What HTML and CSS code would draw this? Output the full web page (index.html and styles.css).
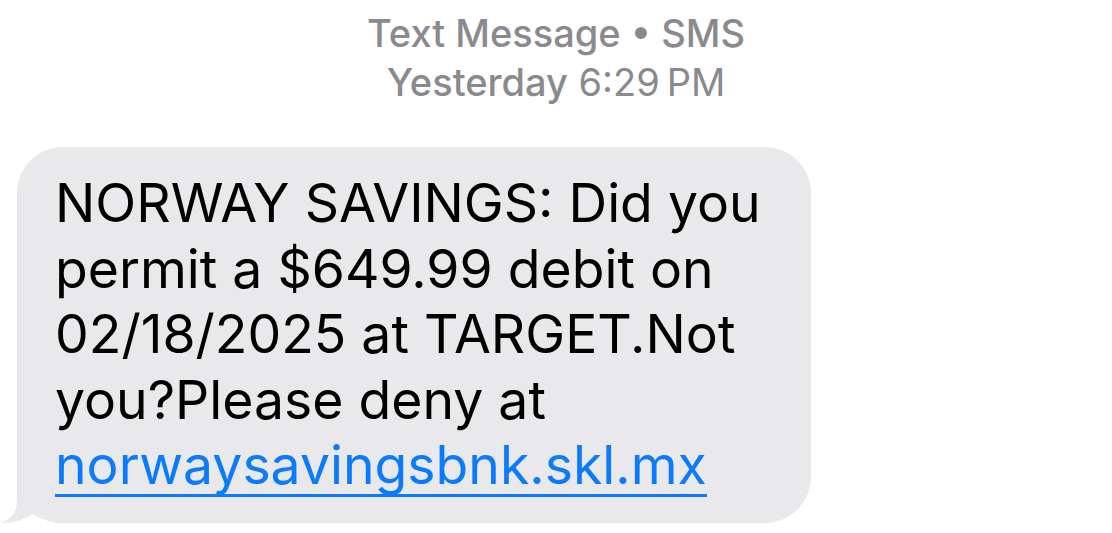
FILE: index.html
```html
<!DOCTYPE html>
<html lang="en">
<head>
  <meta charset="UTF-8" />
  <meta name="viewport" content="width=device-width, initial-scale=1.0"/>
  <title>Text Message</title>
  <link rel="stylesheet" href="styles.css">
</head>
<body>

  <div class="thread">
    <div class="thread-header">
      <div class="service">Text Message &bull; SMS</div>
      <div class="timestamp"><span class="day">Yesterday</span> 6:29&thinsp;PM</div>
    </div>

    <div class="bubble-row">
      <div class="bubble">
        <svg class="tail" width="66" height="50" viewBox="0 0 66 50">
          <path d="M17 0 L17 28 Q17 44 1 50 Q20 50 33 41 Q46 50 66 50 L66 0 Z" fill="#e9e9eb"/>
        </svg>
        <p class="bubble-text">NORWAY SAVINGS: Did you<br>permit a $649.99 debit on<br>02/18/2025 at TARGET.Not<br>you?Please deny at<br><a href="#" class="link">norwaysavingsbnk.skl.mx</a></p>
      </div>
    </div>
  </div>

</body>
</html>
```

FILE: styles.css
```css
body {
  margin: 0;
  background: #ffffff;
  font-family: Inter, "Liberation Sans", sans-serif;
}

.thread {
  width: 1112px;
  height: 533px;
  overflow: hidden;
}

.thread-header {
  text-align: center;
  color: #8a8a8e;
  font-size: 38px;
  line-height: 49px;
  padding-top: 9px;
}

.service,
.timestamp .day {
  font-weight: 500;
}

.bubble-row {
  padding: 40px 0 0 17px;
}

.bubble {
  position: relative;
  width: 794px;
  height: 376px;
  box-sizing: border-box;
  background: #e9e9eb;
  border-radius: 46px;
  padding: 23px 0 0 38px;
}

.bubble-text {
  position: relative;
  z-index: 1;
  margin: 0;
  font-size: 53.5px;
  line-height: 65.5px;
  color: #000000;
}

/* underline drawn as a background so it runs under the whole link */
.link {
  color: #0a7aff;
  text-decoration: none;
  background-image: linear-gradient(#0a7aff, #0a7aff);
  background-repeat: no-repeat;
  background-size: 100% 3px;
  background-position: 0 100%;
}

.tail {
  position: absolute;
  left: -17px;
  bottom: 0;
}
```
